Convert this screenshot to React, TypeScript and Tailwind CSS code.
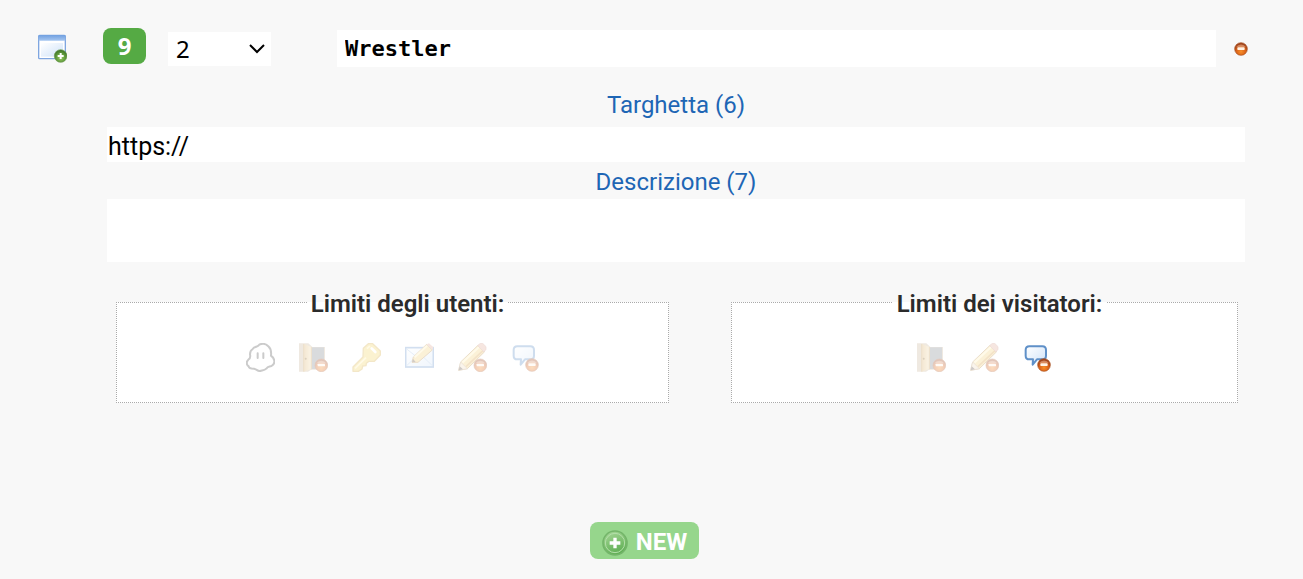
import React from 'react';

interface IconProps {
  children: React.ReactNode;
}

const Icon: React.FC<IconProps> = ({ children }) => (
  <svg viewBox="0 0 87 87" className="block size-[29px]" aria-hidden="true">
    {children}
  </svg>
);

// Shared gradients, referenced by id from every icon
const Gradients: React.FC = () => (
  <svg width="0" height="0" className="absolute" aria-hidden="true">
    <defs>
      <radialGradient id="orange" cx="0.5" cy="0.7" r="0.6">
        <stop offset="0" stopColor="#f88f2a" />
        <stop offset="0.6" stopColor="#da6218" />
        <stop offset="1" stopColor="#a0441c" />
      </radialGradient>
      <radialGradient id="green" cx="0.5" cy="0.65" r="0.6">
        <stop offset="0" stopColor="#9bcb62" />
        <stop offset="0.6" stopColor="#5f9a3c" />
        <stop offset="1" stopColor="#3f7428" />
      </radialGradient>
      <linearGradient id="sky" x1="0" y1="0" x2="1" y2="1">
        <stop offset="0" stopColor="#ffffff" />
        <stop offset="1" stopColor="#cfe2f8" />
      </linearGradient>
      <linearGradient id="wood" x1="0" y1="0" x2="1" y2="0">
        <stop offset="0" stopColor="#d9b06a" />
        <stop offset="1" stopColor="#f2dcae" />
      </linearGradient>
      <linearGradient id="bar" x1="0" y1="0" x2="0" y2="1">
        <stop offset="0" stopColor="#6f9fe0" />
        <stop offset="1" stopColor="#a5c6f0" />
      </linearGradient>
      <linearGradient id="mint" x1="0" y1="0" x2="0.4" y2="1">
        <stop offset="0" stopColor="#a9d99a" />
        <stop offset="1" stopColor="#62b056" />
      </linearGradient>
    </defs>
  </svg>
);

const MinusBadge: React.FC = () => (
  <g>
    <circle cx="67" cy="67" r="19" fill="url(#orange)" stroke="#a8501f" strokeWidth="2" />
    <path d="M53 61A15 12 0 0 1 81 61Z" fill="#fff" opacity="0.3" />
    <rect x="56" y="62" width="22" height="8" rx="2" fill="#fff3e6" />
  </g>
);

const WindowAddIcon: React.FC = () => (
  <Icon>
    <rect x="2" y="4" width="80" height="70" rx="3" fill="#fff" stroke="#7fa6e0" strokeWidth="4" />
    <rect x="9" y="27" width="66" height="41" fill="url(#sky)" />
    <rect x="2" y="3" width="80" height="17" rx="2" fill="url(#bar)" />
    <circle cx="68" cy="66" r="19" fill="url(#green)" stroke="#6d9a52" strokeWidth="2" />
    <path d="M68 57V75M59 66H77" stroke="#fff" strokeWidth="6" />
  </Icon>
);

const GhostIcon: React.FC = () => (
  <Icon>
    <path
      d="M20 18C26 9 36 13 40 5C50 0 61 3 67 10C75 17 76 29 75 38C86 46 89 60 79 67C73 73 66 68 61 77C55 83 47 82 43 84C35 85 31 78 24 77C15 77 9 76 8 70C0 65 1 55 7 50C15 46 13 40 12 34C12 27 14 22 20 18Z"
      fill="#fff"
      stroke="#555"
      strokeWidth="6"
    />
    <path d="M35 31V45M52 31V45" stroke="#555" strokeWidth="6" strokeLinecap="round" />
  </Icon>
);

const DoorIcon: React.FC = () => (
  <Icon>
    <path d="M0 1H28L40 12H78V80H36L27 86H0Z" fill="#cbb99e" />
    <rect x="38" y="13" width="37" height="65" fill="#858991" />
    <path d="M14 2L37 12V78L14 86Z" fill="url(#wood)" />
    <path d="M14 3V86M37 12V79" stroke="#c59a55" strokeWidth="3" />
    <circle cx="20" cy="47" r="3" fill="#8a6427" />
    <MinusBadge />
  </Icon>
);

const KeyIcon: React.FC = () => (
  <Icon>
    <path
      d="M34 16L49 2H62L85 24V36L67 55H51L43 61L42 68L32 69L30 78L19 85H3V72L33 42Z"
      fill="#f5d767"
      stroke="#d8b14c"
      strokeWidth="4"
      strokeLinejoin="round"
    />
    <path d="M9 76L42 44M45 17L54 9" stroke="#fff0b0" strokeWidth="5" />
    <path d="M59 16L70 27" stroke="#fff" strokeWidth="8" strokeLinecap="round" />
  </Icon>
);

const EnvelopeEditIcon: React.FC = () => (
  <Icon>
    <rect x="2" y="14" width="83" height="58" fill="url(#sky)" stroke="#6c98cf" strokeWidth="5" />
    <path d="M5 18L43 48L82 18M5 68L32 42M82 68L55 42" fill="none" stroke="#a9c6e8" strokeWidth="3" />
    <path d="M21 58L25 42L65 4L82 21L39 58Z" fill="#f4d27c" stroke="#bd9352" strokeWidth="3" />
    <path d="M29 43L66 8" stroke="#fff0b8" strokeWidth="6" />
    <path d="M65 4L72 1L85 13L82 21Z" fill="#e4ad9c" />
    <path d="M21 58L24 47L32 57Z" fill="#6e5846" />
  </Icon>
);

const PencilMinusIcon: React.FC = () => (
  <Icon>
    <path d="M2 82L8 57L61 6L80 26L28 77Z" fill="#f4d27c" stroke="#bd9352" strokeWidth="3" />
    <path d="M13 59L63 12" stroke="#fff0b8" strokeWidth="7" />
    <path d="M24 71L75 23" stroke="#d9a24b" strokeWidth="5" />
    <path d="M59 8L67 1H74L84 11V19L78 27Z" fill="#e4ad9c" stroke="#c58b78" strokeWidth="2" />
    <path d="M8 57L28 77L2 82Z" fill="#f0dcc0" stroke="#b79a78" strokeWidth="2" />
    <path d="M2 82L5 70L15 79Z" fill="#5d5048" />
    <MinusBadge />
  </Icon>
);

const BubbleMinusIcon: React.FC = () => (
  <Icon>
    <path
      d="M19 10H58Q69 10 69 21V38Q69 49 58 49H42L29 65L30 49H19Q8 49 8 38V21Q8 10 19 10Z"
      fill="url(#sky)"
      stroke="#5f90c8"
      strokeWidth="6"
      strokeLinejoin="round"
    />
    <g transform="translate(-4 -1)">
      <MinusBadge />
    </g>
  </Icon>
);

interface Limit {
  label: string;
  icon: React.ReactNode;
  active?: boolean;
}

const userLimits: Limit[] = [
  { label: 'Fantasma', icon: <GhostIcon /> },
  { label: 'Accesso', icon: <DoorIcon /> },
  { label: 'Chiave', icon: <KeyIcon /> },
  { label: 'Messaggi', icon: <EnvelopeEditIcon /> },
  { label: 'Scrittura', icon: <PencilMinusIcon /> },
  { label: 'Commenti', icon: <BubbleMinusIcon /> },
];

const visitorLimits: Limit[] = [
  { label: 'Accesso', icon: <DoorIcon /> },
  { label: 'Scrittura', icon: <PencilMinusIcon /> },
  { label: 'Commenti', icon: <BubbleMinusIcon />, active: true },
];

const LimitBox: React.FC<{ title: string; limits: Limit[] }> = ({ title, limits }) => (
  <fieldset className="min-w-0 border border-dotted border-[#aaa] bg-white pt-[25px] pb-[30px] pl-[30px]">
    <legend className="mx-auto px-1 pt-1 text-2xl leading-7 font-semibold text-[#2b2b2b]">{title}</legend>
    <div className="flex justify-center gap-6 pr-[30px]">
      {limits.map((limit) => (
        <button
          key={limit.label}
          type="button"
          aria-label={limit.label}
          className={limit.active ? 'cursor-pointer' : 'cursor-pointer opacity-30'}
        >
          {limit.icon}
        </button>
      ))}
    </div>
  </fieldset>
);

export default function App() {
  return (
    <main className="min-h-screen bg-[#f8f8f8] pt-7 pb-5 font-[Roboto,sans-serif] text-2xl text-black">
      <Gradients />
      <div className="flex items-center pr-[55px] pl-[38px]">
        <button type="button" aria-label="Aggiungi finestra" className="cursor-pointer">
          <WindowAddIcon />
        </button>
        <span className="mb-[5px] ml-9 w-[43px] rounded-lg bg-[#55aa44] py-1 text-center font-['Noto_Sans',sans-serif] leading-7 font-bold text-white">
          9
        </span>
        <div className="relative ml-[22px] w-[103px]">
          <select
            aria-label="Livello"
            defaultValue="2"
            className="block h-[34px] w-full appearance-none bg-white px-2 font-['Noto_Sans',sans-serif] leading-8"
          >
            <option>1</option>
            <option>2</option>
            <option>3</option>
          </select>
          <svg viewBox="0 0 16 10" className="pointer-events-none absolute top-3 right-1.5 h-2.5 w-4" aria-hidden="true">
            <path d="M1 1L8 8L15 1" fill="none" stroke="#000" strokeWidth="2" />
          </svg>
        </div>
        <input
          type="text"
          aria-label="Nome"
          defaultValue="Wrestler"
          className="ml-[66px] h-[37px] min-w-0 flex-1 bg-white px-2 font-['DejaVu_Sans_Mono',monospace] text-[22px] font-bold"
        />
        <button type="button" aria-label="Rimuovi" className="ml-[18px] cursor-pointer">
          <svg viewBox="0 0 42 42" className="block size-[14px]" aria-hidden="true">
            <circle cx="21" cy="21" r="19" fill="url(#orange)" stroke="#a8501f" strokeWidth="2" />
            <path d="M7 15A15 12 0 0 1 35 15Z" fill="#fff" opacity="0.3" />
            <rect x="10" y="16" width="22" height="8" rx="2" fill="#fff3e6" />
          </svg>
        </button>
      </div>

      <div className="flex flex-col pt-5 pr-[58px] pl-[107px]">
        <label htmlFor="targhetta" className="pb-1.5 text-center leading-8 text-[#1e66b5]">
          Targhetta (6)
        </label>
        <input
          id="targhetta"
          type="text"
          defaultValue="https://"
          className="h-[35px] w-full bg-white px-px pt-1 text-[25px]"
        />
        <label htmlFor="descrizione" className="pt-1 pb-px text-center leading-8 text-[#1e66b5]">
          Descrizione (7)
        </label>
        <textarea id="descrizione" className="block h-[63px] w-full resize-none bg-white px-px" />
        <div className="mt-6 grid grid-cols-[12fr_11fr] gap-[62px] pr-[7px] pl-[9px]">
          <LimitBox title="Limiti degli utenti:" limits={userLimits} />
          <LimitBox title="Limiti dei visitatori:" limits={visitorLimits} />
        </div>
      </div>

      <div className="mt-[119px] flex justify-center pr-[14px]">
        <button
          type="button"
          className="flex cursor-pointer items-center gap-2 rounded-lg bg-[#96d68c] px-3 pt-1.5 pb-0.5 leading-[29px] font-bold text-white"
        >
          <svg viewBox="0 0 78 78" className="size-[26px]" aria-hidden="true">
            <circle cx="39" cy="39" r="36" fill="url(#mint)" stroke="#74b56a" strokeWidth="5" />
            <circle cx="39" cy="39" r="29" fill="none" stroke="#b4dfaa" strokeWidth="3" />
            <path d="M39 23V55M23 39H55" stroke="#fff" strokeWidth="10" />
          </svg>
          NEW
        </button>
      </div>
    </main>
  );
}
